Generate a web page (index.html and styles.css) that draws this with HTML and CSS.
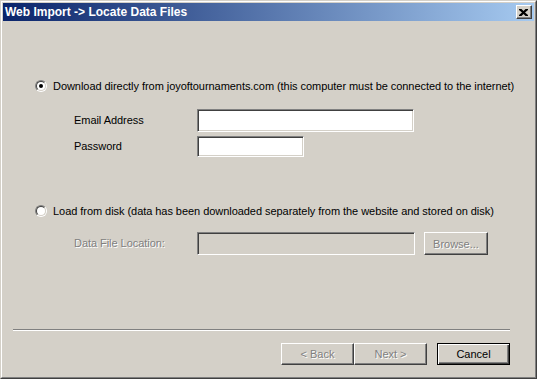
FILE: index.html
```html
<!DOCTYPE html>
<html lang="en">
<head>
  <meta charset="UTF-8" />
  <title>Web Import -&gt; Locate Data Files</title>
  <link rel="stylesheet" href="styles.css">
</head>
<body>
  <div class="window">
    <div class="frame">
      <div class="titlebar">
        <span class="title">Web Import -&gt; Locate Data Files</span>
        <span class="close-btn">
          <svg width="9" height="7" viewBox="0 0 9 7">
            <path d="M0 0h2.5l2 2 2-2h2.5v1L6 3.5 9 6v1H6.5l-2-2-2 2H0V6l3-2.5L0 1z" fill="#000"/>
          </svg>
        </span>
      </div>

      <div class="content">
        <div class="option option-web">
          <span class="radio checked"></span>
          <span>Download directly from joyoftournaments.com (this computer must be connected to the internet)</span>
        </div>
        <div class="fields">
          <label class="field-label">Email Address</label>
          <div class="edit email"></div>
          <label class="field-label">Password</label>
          <div class="edit password"></div>
        </div>

        <div class="option option-disk">
          <span class="radio"></span>
          <span>Load from disk (data has been downloaded separately from the website and stored on disk)</span>
        </div>
        <div class="fields disk-fields">
          <label class="field-label disabled">Data File Location:</label>
          <div class="file-row">
            <div class="edit location disabled-edit"></div>
            <button class="btn browse disabled">Browse...</button>
          </div>
        </div>
      </div>

      <div class="footer">
        <div class="separator"></div>
        <div class="buttons">
          <button class="btn disabled">&lt; Back</button>
          <button class="btn disabled">Next &gt;</button>
          <button class="btn default cancel">Cancel</button>
        </div>
      </div>
    </div>
  </div>
</body>
</html>
```

FILE: styles.css
```css
html, body {
  margin: 0;
  padding: 0;
}
body {
  width: 537px;
  height: 379px;
  background-color: #d4d0c8;
  font-family: 'Liberation Sans', Arial, sans-serif;
  font-size: 11px;
  letter-spacing: -0.05px;
  color: #000;
}
.window {
  width: 537px;
  height: 379px;
  box-sizing: border-box;
  border: 1px solid;
  border-color: #d4d0c8 #404040 #404040 #d4d0c8;
}
.frame {
  height: 100%;
  box-sizing: border-box;
  border: 1px solid;
  border-color: #fff #808080 #808080 #fff;
  padding: 1px;
  display: flex;
  flex-direction: column;
}
.titlebar {
  height: 18px;
  display: flex;
  align-items: center;
  justify-content: space-between;
  background: linear-gradient(to right, #0a246a, #a6caf0);
  padding: 0 2px 0 2px;
}
.title {
  color: #fff;
  font-weight: bold;
  font-size: 12px;
  letter-spacing: 0;
}
.close-btn {
  width: 16px;
  height: 14px;
  box-sizing: border-box;
  background: #d4d0c8;
  border: 1px solid;
  border-color: #fff #404040 #404040 #fff;
  box-shadow: inset -1px -1px #808080;
  display: flex;
  align-items: center;
  justify-content: center;
  padding-right: 1px;
}
.close-btn svg {
  display: block;
}
.content {
  padding-left: 32px;
}
.option {
  height: 16px;
  display: flex;
  align-items: center;
  gap: 6px;
}
.option-web {
  margin-top: 57px;
}
.option-disk {
  margin-top: 46px;
}
.radio {
  position: relative;
  width: 12px;
  height: 12px;
  box-sizing: border-box;
  border-radius: 50%;
  border: 1px solid;
  border-color: #808080 #fff #fff #808080;
}
.radio::before {
  content: '';
  position: absolute;
  inset: 0;
  border-radius: 50%;
  border: 1px solid;
  border-color: #404040 #d4d0c8 #d4d0c8 #404040;
  background: #fff;
}
.radio.checked::after {
  content: '';
  position: absolute;
  left: 3px;
  top: 3px;
  width: 4px;
  height: 4px;
  border-radius: 50%;
  background: #000;
}
.fields {
  display: grid;
  grid-template-columns: 123px auto;
  row-gap: 4px;
  align-items: center;
  margin-left: 39px;
  margin-top: 15px;
}
.field-label {
  margin-top: -2px;
}
.disk-fields {
  margin-top: 13px;
}
.edit {
  box-sizing: border-box;
  background: #fff;
  border: 1px solid;
  border-color: #808080 #fff #fff #808080;
  box-shadow: inset 1px 1px #404040, inset -1px -1px #d4d0c8;
}
.email {
  width: 217px;
  height: 23px;
}
.password {
  width: 107px;
  height: 21px;
}
.location {
  width: 218px;
  height: 23px;
}
.disabled-edit {
  background: #d4d0c8;
}
.file-row {
  display: flex;
  gap: 9px;
}
.disabled {
  color: #808080;
  text-shadow: 1px 1px #fff;
}
.btn {
  font-family: 'Liberation Sans', Arial, sans-serif;
  font-size: 11px;
  height: 22px;
  width: 73px;
  box-sizing: border-box;
  background: #d4d0c8;
  border: 1px solid;
  border-color: #fff #404040 #404040 #fff;
  box-shadow: inset -1px -1px #808080;
  padding: 0;
  margin: 0;
}
.browse {
  width: 64px;
  height: 23px;
}
.btn.default {
  border-color: #000;
  box-shadow: inset 1px 1px #fff, inset -1px -1px #404040, inset -2px -2px #808080;
}
.footer {
  margin-top: auto;
  padding: 0 24px 11px 10px;
}
.separator {
  border-top: 1px solid #808080;
  border-bottom: 1px solid #fff;
  height: 0;
}
.buttons {
  margin-top: 12px;
  display: flex;
  justify-content: flex-end;
}
.cancel {
  margin-left: 10px;
}
```
